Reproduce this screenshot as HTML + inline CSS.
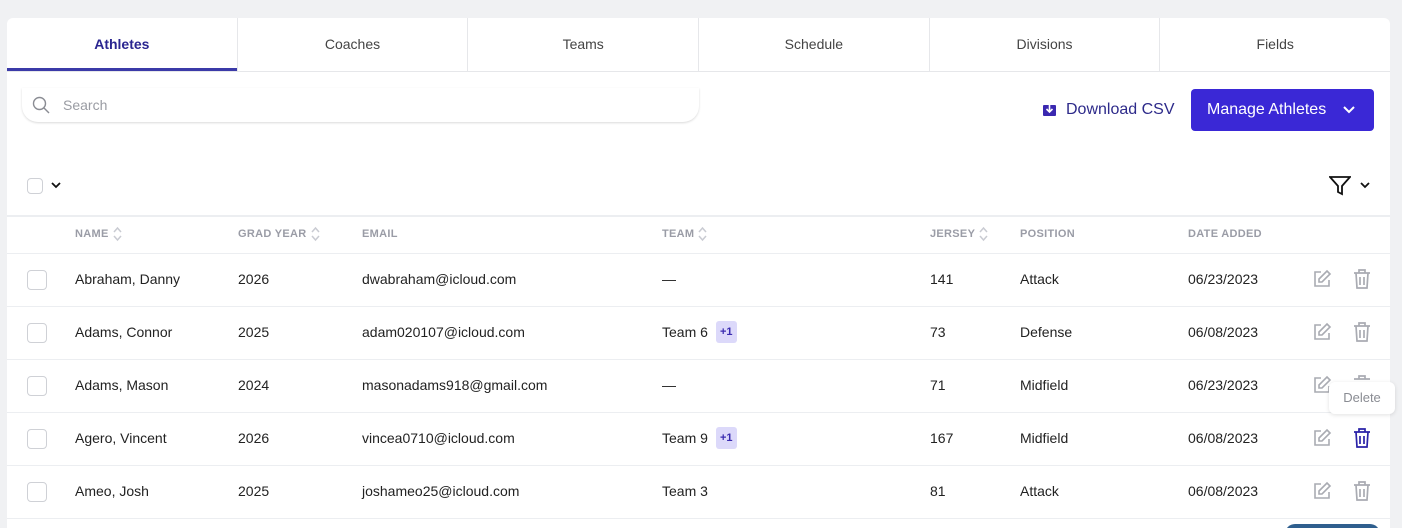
<!DOCTYPE html><html><head><style>
*{box-sizing:border-box;margin:0;padding:0}
html,body{width:1402px;height:528px;overflow:hidden}
body{background:#f0f1f3;font-family:"Liberation Sans",sans-serif;position:relative;color:#222}
.card{position:absolute;left:7px;top:18px;width:1383px;height:520px;background:#fff;border-radius:6px 6px 0 0}
.tabs{display:flex;height:54px;border-bottom:1px solid #e6e7ea}
.tab{flex:1;text-align:center;line-height:52px;font-size:14px;color:#444;border-left:1px solid #e6e7ea}
.tab:first-child{border-left:none;color:#2a2590;font-weight:bold;border-bottom:3px solid #3b3aa8}
.search{position:absolute;left:15px;top:70px;width:677px;height:34px;border-radius:0 0 16px 16px;box-shadow:0 1px 2px rgba(0,0,0,.15);}
.search span{position:absolute;left:41px;top:9px;font-size:14px;color:#9a9ca3}
.dl{position:absolute;top:83px;font-size:16px;color:#2d2a8a}
.btn{position:absolute;left:1184px;top:71px;width:183px;height:42px;background:#3a28d6;border-radius:4px;color:#fff;font-size:16px;line-height:42px;padding-left:16px}
.cb{position:absolute;width:20px;height:20px;border:1px solid #cfd1d6;border-radius:4px;background:#fff}
.th{position:absolute;font-size:11px;font-weight:bold;color:#9a9ca6;letter-spacing:.3px;line-height:16px}
.th svg{position:absolute;top:0;margin-left:4px}
.line{position:absolute;left:7px;width:1383px;height:1px;background:#eceef1}
.td{position:absolute;font-size:14px;color:#222;line-height:16px}
.badge{display:inline-block;background:#dcd9fa;color:#3a2bb0;font-size:11px;font-weight:bold;line-height:14px;padding:4px 4px;border-radius:3px}
</style></head><body>
<div class="card">
<div class="tabs"><div class="tab">Athletes</div><div class="tab">Coaches</div><div class="tab">Teams</div><div class="tab">Schedule</div><div class="tab">Divisions</div><div class="tab">Fields</div></div>
<div class="search"><svg style="position:absolute;left:10px;top:8px" width="18" height="18" viewBox="0 0 18 18" fill="none" stroke="#8a8c93" stroke-width="1.4"><circle cx="7.5" cy="7.5" r="6"/><path d="M12 12l5 5"/></svg><span>Search</span></div>
<svg style="position:absolute;left:1036px;top:85px" width="13" height="13" viewBox="0 0 13 13"><rect x="0" y="2" width="13" height="11" rx="1" fill="#3a28b0"/><path d="M6.5 0v9M3.5 6l3 3 3-3" stroke="#fff" stroke-width="1.6" fill="none"/></svg>
<div class="dl" style="left:1059px">Download CSV</div>
<div class="btn">Manage Athletes<svg style="position:absolute;left:152px;top:16px" width="12" height="10" viewBox="0 0 12 10" fill="none" stroke="#fff" stroke-width="2"><path d="M1 2l5 5 5-5"/></svg></div>
<svg style="position:absolute;left:1322px;top:158px" width="22" height="20" viewBox="0 0 22 20" fill="none" stroke="#111" stroke-width="1.8"><path d="M1 1h20l-8 9v8l-4 -2v-6z"/></svg>
<svg style="position:absolute;left:1353px;top:164px" width="10" height="7" viewBox="0 0 10 7" fill="none" stroke="#111" stroke-width="1.8"><path d="M1 1l4 4 4-4"/></svg>
</div>
<div class="cb" style="left:27px;top:178px;width:16px;height:16px"></div>
<svg style="position:absolute;left:51px;top:182px" width="10" height="7" viewBox="0 0 10 7" fill="none" stroke="#111" stroke-width="1.8"><path d="M1 1l4 4 4-4"/></svg>
<div class="line" style="top:215px;height:2px"></div>
<div id="hd"></div>
<div class="line" style="top:253px"></div>
<div class="line" style="top:306px"></div>
<div class="line" style="top:359px"></div>
<div class="line" style="top:412px"></div>
<div class="line" style="top:465px"></div>
<div class="line" style="top:518px"></div>
<div id="rows"></div>
<script>
var ar='<svg width="9" height="16" viewBox="0 0 9 16" fill="none" stroke="#c9cbd2" stroke-width="1.5"><path d="M1 6l3.5-4 3.5 4M1 10l3.5 4 3.5-4"/></svg>';
var hs=[["NAME",75,1],["GRAD YEAR",238,1],["EMAIL",362,0],["TEAM",662,1],["JERSEY",930,1],["POSITION",1020,0],["DATE ADDED",1188,0]];
document.getElementById("hd").innerHTML=hs.map(function(x){return '<div class="th" style="left:'+x[1]+'px;top:226px">'+x[0]+(x[2]?ar:'')+'</div>'}).join('');
var d=[["Abraham, Danny","2026","dwabraham@icloud.com","—","","141","Attack","06/23/2023"],
["Adams, Connor","2025","adam020107@icloud.com","Team 6",1,"73","Defense","06/08/2023"],
["Adams, Mason","2024","masonadams918@gmail.com","—","","71","Midfield","06/23/2023"],
["Agero, Vincent","2026","vincea0710@icloud.com","Team 9",1,"167","Midfield","06/08/2023"],
["Ameo, Josh","2025","joshameo25@icloud.com","Team 3","","81","Attack","06/08/2023"]];
var h="";d.forEach(function(r,i){var y=253+i*53,t=y+18;
h+='<div class="cb" style="left:27px;top:'+(y+17)+'px"></div>';
h+='<div class="td" style="left:75px;top:'+t+'px">'+r[0]+'</div><div class="td" style="left:238px;top:'+t+'px">'+r[1]+'</div><div class="td" style="left:362px;top:'+t+'px">'+r[2]+'</div>';
h+='<div class="td" style="left:662px;top:'+t+'px">'+r[3]+(r[4]?'<span class="badge" style="position:absolute;left:54px;top:-3px">+1</span>':'')+'</div>';
h+='<div class="td" style="left:930px;top:'+t+'px">'+r[5]+'</div><div class="td" style="left:1020px;top:'+t+'px">'+r[6]+'</div><div class="td" style="left:1188px;top:'+t+'px">'+r[7]+'</div>';
h+='<svg style="position:absolute;left:1312px;top:'+(y+16)+'px" width="20" height="20" viewBox="0 0 20 20" fill="none" stroke="#a9abb2" stroke-width="1.6"><path d="M9 3H3v14h14v-6"/><path d="M15 2l3 3-8 8H7v-3z"/></svg>';
var c=i==3?"#2a22a8":"#a9abb2";
if(i!=2)h+='<svg style="position:absolute;left:1352px;top:'+(y+15)+'px" width="20" height="22" viewBox="0 0 20 22" fill="none" stroke="'+c+'" stroke-width="1.7"><path d="M2 5h16M7 5V2h6v3M4 5l1 15h10l1-15M8 9v8M12 9v8"/></svg>';
else h+='<svg style="position:absolute;left:1352px;top:'+(y+15)+'px" width="20" height="8" viewBox="0 0 20 8" fill="none" stroke="#a9abb2" stroke-width="1.7"><path d="M2 5h16M7 5V2h6v3"/></svg>';
});
document.getElementById("rows").innerHTML=h;
</script>
<div style="position:absolute;left:1329px;top:382px;width:66px;height:32px;background:#fff;border-radius:6px;box-shadow:0 1px 4px rgba(0,0,0,.12);font-size:13px;color:#8a8c93;text-align:center;line-height:32px">Delete</div>
<div style="position:absolute;left:1285px;top:524px;width:95px;height:20px;background:#2f5f8e;border-radius:10px"></div>
</body></html>
